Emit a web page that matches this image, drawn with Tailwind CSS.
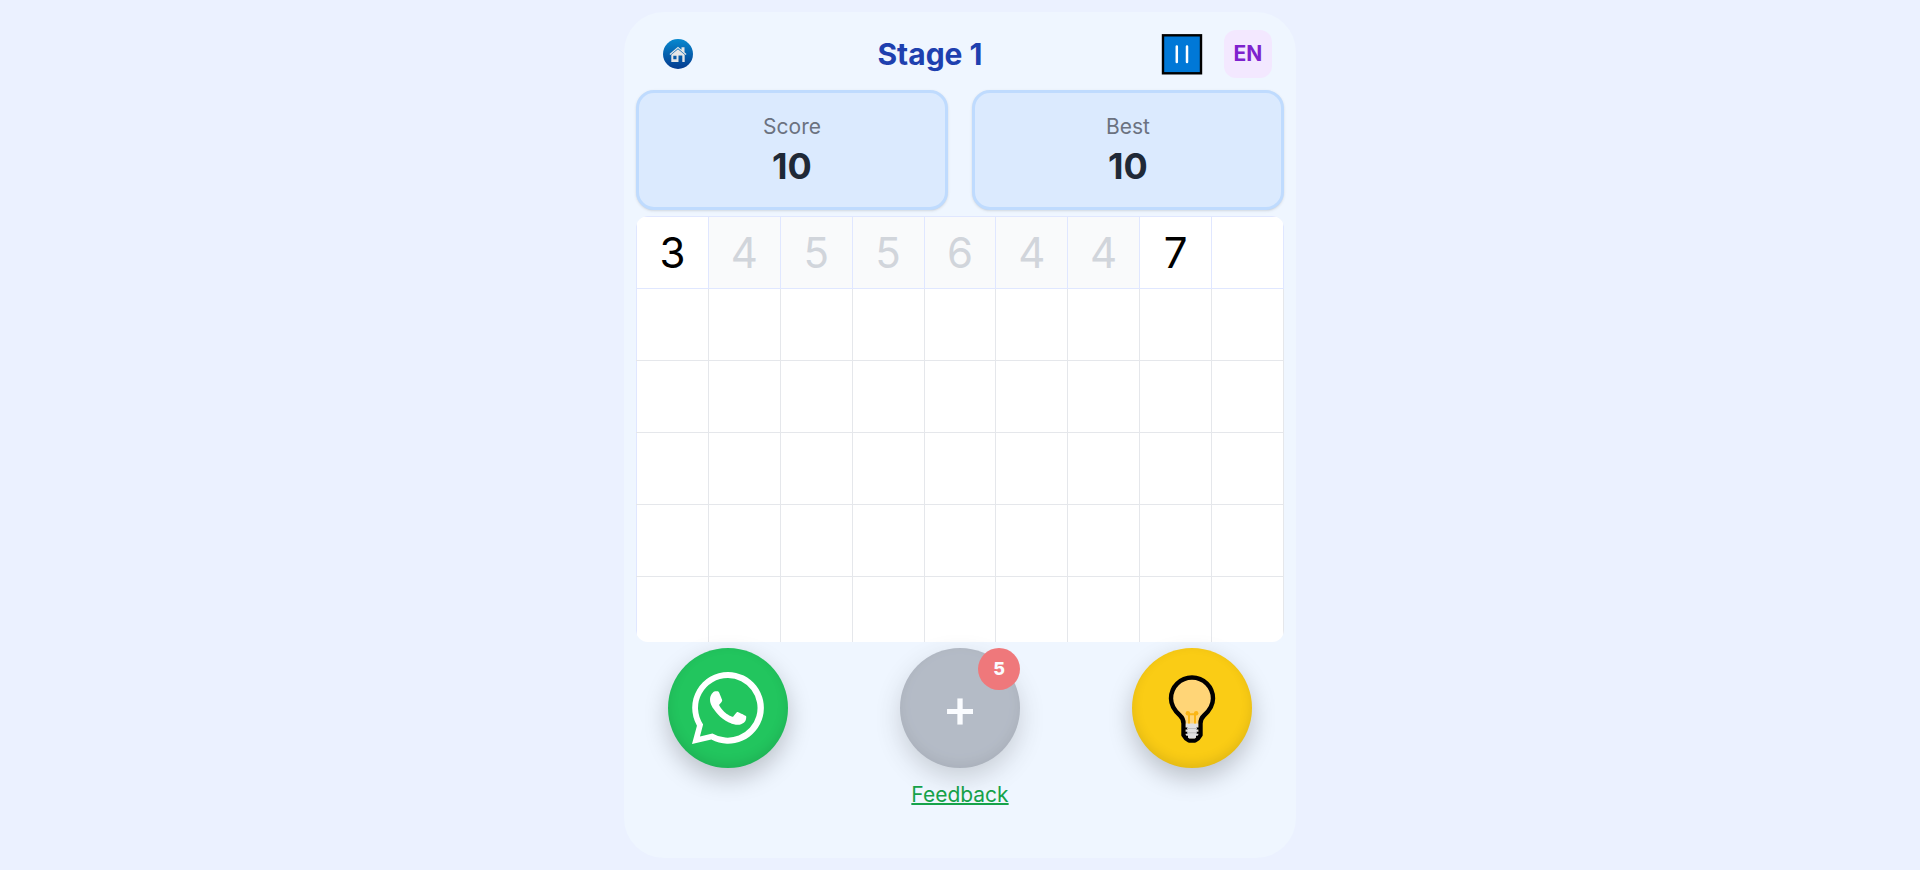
<!DOCTYPE html>
<html lang="en">
<head>
<meta charset="utf-8">
<meta name="viewport" content="width=device-width, initial-scale=1">
<title>Stage 1</title>
<script src="https://cdn.jsdelivr.net/npm/@tailwindcss/browser@4"></script>
</head>
<body class="h-screen bg-[#ebf1ff] p-3 font-['Inter',sans-serif]">
<main class="mx-auto flex h-full max-w-2xl flex-col overflow-hidden rounded-[40px] bg-[#eff6ff] px-3 pt-3">
  <header class="flex shrink-0 items-center justify-between px-3 pt-[6px] pb-3">
    <button aria-label="Home" class="flex h-12 w-15 items-center justify-center">
      <svg class="size-[30px]" viewBox="0 0 30 30">
        <defs><linearGradient id="sky" x1="0" y1="0" x2="0" y2="1"><stop offset="0" stop-color="#0789cf"/><stop offset="1" stop-color="#053b8f"/></linearGradient></defs>
        <circle cx="15" cy="15" r="15" fill="url(#sky)"/>
        <path d="M6.500 15 15 7.800l3.500 2.900V8.300h3v5l2 1.700-.8.900L15 9.300l-7.700 6.600z" fill="#e6e6e6"/>
        <path d="M8.300 15.800 15 10.200l6.700 5.600v7.200h-2.400v-6.500h-3.800V23H8.300zm2 1v3.400h3.200v-3.400z" fill="#e6e6e6" fill-rule="evenodd"/>
      </svg>
    </button>
    <h1 class="text-[30px] leading-9 font-bold text-[#1e40af]">Stage 1</h1>
    <div class="flex items-center gap-3">
      <button aria-label="Pause" class="flex h-12 w-15 items-center justify-center">
        <svg class="size-[42px]" viewBox="0 0 42 42">
          <rect x="2" y="2.300" width="38" height="38" fill="#0078d7" stroke="#000" stroke-width="2.400"/>
          <path d="M15.800 13.500v15.500M26 13.500v15.500" stroke="#fff" stroke-width="2.500" stroke-linecap="round"/>
        </svg>
      </button>
      <button class="size-12 rounded-xl bg-[#f3e8ff] text-[21px] font-bold text-[#7e22ce]">EN</button>
    </div>
  </header>

  <section class="grid shrink-0 grid-cols-2 gap-6">
    <div class="flex h-[120px] flex-col items-center justify-center rounded-[18px] border-3 border-[#bfdbfe] bg-[#dbeafe] shadow-sm">
      <p class="text-[21px] leading-8 text-[#6b7280]">Score</p>
      <p class="text-[36px] leading-[46px] font-bold text-[#1f2937]">10</p>
    </div>
    <div class="flex h-[120px] flex-col items-center justify-center rounded-[18px] border-3 border-[#bfdbfe] bg-[#dbeafe] shadow-sm">
      <p class="text-[21px] leading-8 text-[#6b7280]">Best</p>
      <p class="text-[36px] leading-[46px] font-bold text-[#1f2937]">10</p>
    </div>
  </section>

  <section class="mt-[6px] min-h-0 flex-1 overflow-hidden rounded-xl bg-white">
    <table class="w-full table-fixed border-collapse text-center text-[42px] leading-none [&_td]:border [&_td]:border-[#e5e7eb] [&_td]:p-0 [&_td:first-child]:border-l-[#e0e7ff] [&_tr]:h-[72px]">
      <tbody>
        <tr class="[&_td]:border-[#e0e7ff]!">
          <td class="text-black">3</td>
          <td class="bg-[#f9fafb] text-[#d1d5db]">4</td>
          <td class="bg-[#f9fafb] text-[#d1d5db]">5</td>
          <td class="bg-[#f9fafb] text-[#d1d5db]">5</td>
          <td class="bg-[#f9fafb] text-[#d1d5db]">6</td>
          <td class="bg-[#f9fafb] text-[#d1d5db]">4</td>
          <td class="bg-[#f9fafb] text-[#d1d5db]">4</td>
          <td class="text-black">7</td>
          <td class="border-b-[#e5e7eb]!"></td>
        </tr>
        <tr><td></td><td></td><td></td><td></td><td></td><td></td><td></td><td></td><td></td></tr>
        <tr><td></td><td></td><td></td><td></td><td></td><td></td><td></td><td></td><td></td></tr>
        <tr><td></td><td></td><td></td><td></td><td></td><td></td><td></td><td></td><td></td></tr>
        <tr><td></td><td></td><td></td><td></td><td></td><td></td><td></td><td></td><td></td></tr>
        <tr><td></td><td></td><td></td><td></td><td></td><td></td><td></td><td></td><td></td></tr>
      </tbody>
    </table>
  </section>

  <footer class="shrink-0 pt-[6px] pb-[46px]">
    <div class="flex items-center justify-between px-8">
      <button aria-label="Share on WhatsApp" class="flex size-[120px] items-center justify-center rounded-full bg-[#22c55e] shadow-[0_10px_24px_rgba(0,0,0,0.22),inset_0_-4px_12px_rgba(0,0,0,0.1)]">
        <svg class="size-[72px]" viewBox="0 0 24 24" fill="#fff">
          <path d="M17.472 14.382c-.297-.149-1.758-.867-2.030-.967-.273-.099-.471-.148-.670.150-.197.297-.767.966-.940 1.164-.173.199-.347.223-.644.075-.297-.150-1.255-.463-2.390-1.475-.883-.788-1.480-1.761-1.653-2.059-.173-.297-.018-.458.130-.606.134-.133.298-.347.446-.520.149-.174.198-.298.298-.497.099-.198.050-.371-.025-.520-.075-.149-.669-1.612-.916-2.207-.242-.579-.487-.500-.669-.510a12.800 12.800 0 0 0-.570-.010c-.198 0-.520.074-.792.372-.272.297-1.040 1.016-1.040 2.479 0 1.462 1.065 2.875 1.213 3.074.149.198 2.096 3.200 5.077 4.487.709.306 1.262.489 1.694.625.712.227 1.360.195 1.871.118.571-.085 1.758-.719 2.006-1.413.248-.694.248-1.289.173-1.413-.074-.124-.272-.198-.570-.347z"/>
          <path fill-rule="evenodd" d="M12 0A11.950 11.950 0 1 1 6.450 22.530L0 24l1.650-6.100A11.950 11.950 0 0 1 12 0zm0 2a9.950 9.950 0 0 0-8.300 15.500l-1.050 4 4.150-1A9.950 9.950 0 1 0 12 2z"/>
        </svg>
      </button>
      <button aria-label="Add numbers, 5 left" class="relative flex size-[120px] items-center justify-center rounded-full bg-[#9ca3af] text-[54px] leading-none font-medium text-white opacity-70 shadow-[0_10px_24px_rgba(0,0,0,0.22),inset_0_-4px_12px_rgba(0,0,0,0.1)]">+
        <span class="absolute top-0 right-0 flex size-[42px] items-center justify-center rounded-full bg-[#ef4444] text-lg font-extrabold">5</span>
      </button>
      <button aria-label="Hint" class="flex size-[120px] items-center justify-center rounded-full bg-[#facc15] shadow-[0_10px_24px_rgba(0,0,0,0.22),inset_0_-4px_12px_rgba(0,0,0,0.1)]">
        <svg class="size-[72px]" viewBox="0 0 72 72">
          <path d="M36 5.500a21 21 0 0 0-21 21c0 8 4.500 13 9 17 2.500 2.200 3.500 4 3.500 8V63l2.500 3.500 3 2h6l3-2 2.500-3.500V51.500c0-4 1-5.800 3.500-8 4.500-4 9-9 9-17a21 21 0 0 0-21-21z" fill="#ffd577" stroke="#000" stroke-width="4.400" stroke-linejoin="round"/>
          <path d="M29.800 51.500h12.400V63l-3.200 3.500h-6L29.800 63z" fill="#e0e0e0"/>
          <path d="M28 56.500h3.500m9 0H44M28 60.800h3.500m9 0H44M28 64.800h4m8 0H44" stroke="#000" stroke-width="2"/>
          <path d="M31 56.500h10M31 60.800h10" stroke="#bdbdbd"/>
          <path d="M33 51.500v-11m6 11v-11M32 42.300h8" stroke="#fbb615" stroke-width="2"/>
          <circle cx="31.800" cy="41.200" r="2.200" fill="#fbb615"/><circle cx="40.200" cy="41.200" r="2.200" fill="#fbb615"/>
        </svg>
      </button>
    </div>
    <div class="mt-[10px] flex h-[34px] items-center justify-center">
      <a href="#feedback" class="text-[21px] leading-8 text-[#16a34a] underline decoration-2">Feedback</a>
    </div>
  </footer>
</main>
</body>
</html>
